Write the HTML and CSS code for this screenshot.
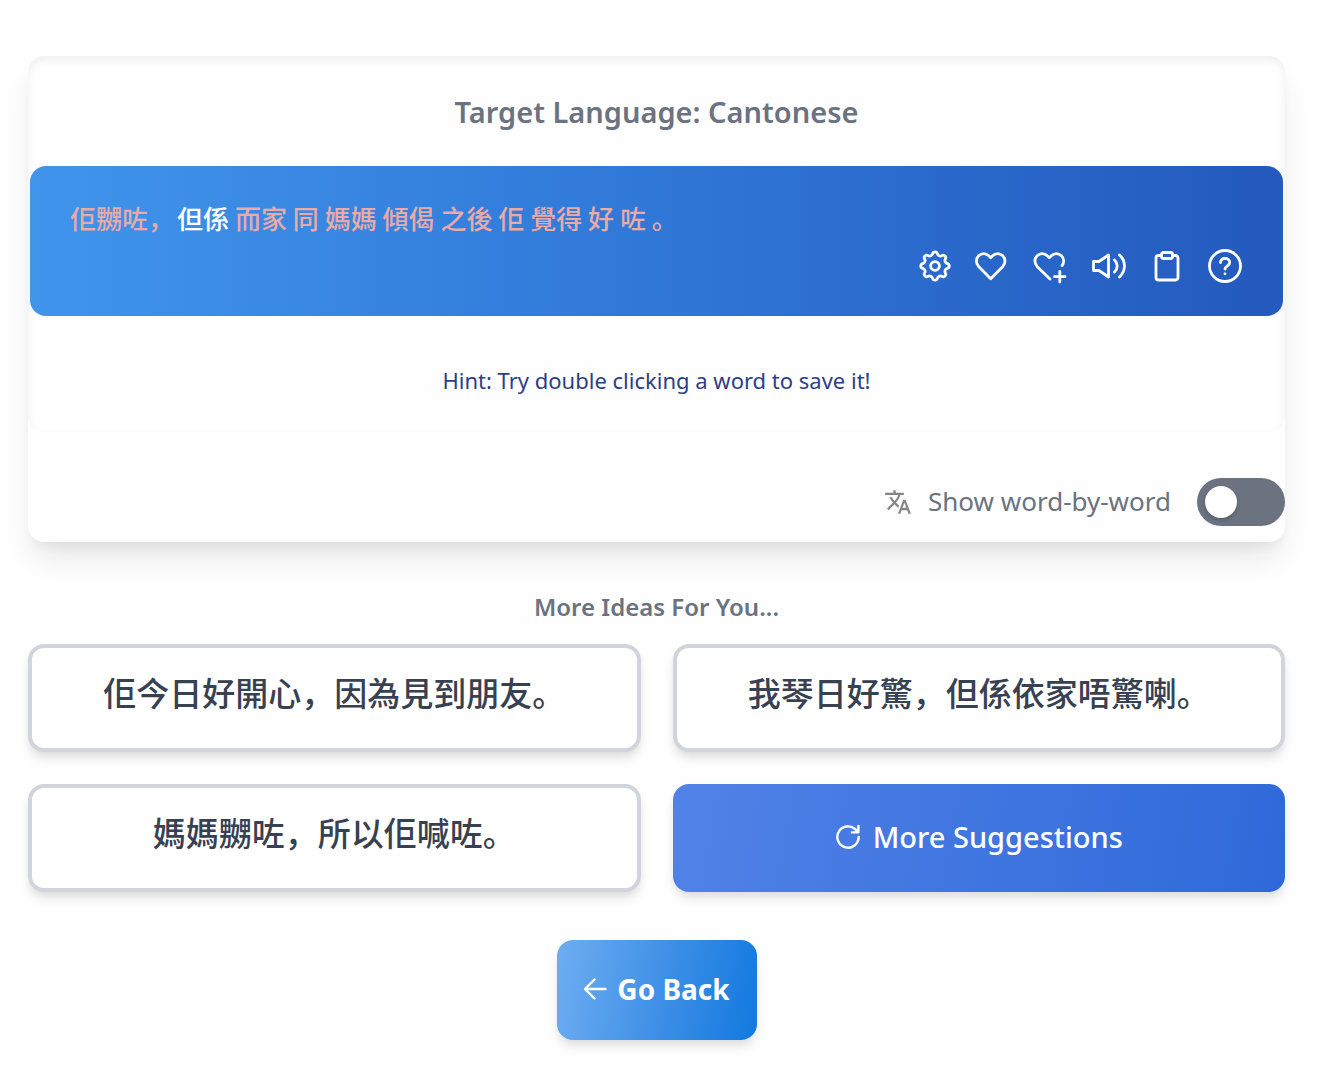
FILE: index.html
```html
<!DOCTYPE html>
<html lang="en">
<head>
<meta charset="utf-8">
<meta name="viewport" content="width=device-width, initial-scale=1">
<title>Target Language: Cantonese</title>
<link rel="stylesheet" href="styles.css">
</head>
<body>
<main class="page">
  <section class="card">
    <div class="panel">
      <h1 class="panel-title">Target Language: Cantonese</h1>
      <div class="phrase">
        <p class="phrase-text"><span>佢嬲咗，</span><span class="known">但係</span> <span>而家</span> <span>同</span> <span>媽媽</span> <span>傾偈</span> <span>之後</span> <span>佢</span> <span>覺得</span> <span>好</span> <span>咗</span> <span>。</span></p>
        <div class="actions">
          <button class="icon-button" type="button" aria-label="Settings">
            <svg viewBox="0 0 40 40"><path d="M32.26 17.56A2.5 2.5 0 0 1 32.26 22.44A3 3 0 0 0 30.39 26.94A2.5 2.5 0 0 1 26.94 30.39A3 3 0 0 0 22.44 32.26A2.5 2.5 0 0 1 17.56 32.26A3 3 0 0 0 13.06 30.39A2.5 2.5 0 0 1 9.61 26.94A3 3 0 0 0 7.74 22.44A2.5 2.5 0 0 1 7.74 17.56A3 3 0 0 0 9.61 13.06A2.5 2.5 0 0 1 13.06 9.61A3 3 0 0 0 17.56 7.74A2.5 2.5 0 0 1 22.44 7.74A3 3 0 0 0 26.94 9.61A2.5 2.5 0 0 1 30.39 13.06A3 3 0 0 0 32.26 17.56Z"/><circle cx="20" cy="20" r="4.4"/></svg>
          </button>
          <button class="icon-button" type="button" aria-label="Like">
            <svg viewBox="0 0 40 40"><path d="M17.700 32.800 5.600 20.400a7.500 7.500 0 0 1 0-10.600a7.200 7.200 0 0 1 10.200 0L17.700 11.800l1.900-2a7.200 7.200 0 0 1 10.200 0a7.500 7.500 0 0 1 0 10.600Z"/></svg>
          </button>
          <button class="icon-button" type="button" aria-label="Save phrase">
            <svg viewBox="0 0 40 40"><path d="M19 33 6.100 20.400a7.500 7.500 0 0 1 0-10.600a7.200 7.200 0 0 1 10.200 0l2 2 2-2a7.200 7.200 0 0 1 10.200 0c2.500 2.500 2.900 6.500 .6 9.800M28.800 25.500v10.500M23.500 30.700h10.500"/></svg>
          </button>
          <button class="icon-button" type="button" aria-label="Listen">
            <svg viewBox="0 0 40 40"><path d="M4.500 15.500H10L19.500 9v22L10 24.500H4.500ZM25.500 14c3.600 3.400 3.600 8.600 0 12M30.500 9c6.600 6.200 6.600 15.800 0 22"/></svg>
          </button>
          <button class="icon-button" type="button" aria-label="Copy">
            <svg viewBox="0 0 40 40"><path d="M14 9.500H11.500A2.500 2.500 0 0 0 9 12v19.500A2.500 2.500 0 0 0 11.500 34h17a2.500 2.500 0 0 0 2.500-2.500V12a2.500 2.500 0 0 0-2.500-2.500H26"/><rect x="14.500" y="6.500" width="11" height="6" rx="2"/></svg>
          </button>
          <button class="icon-button" type="button" aria-label="Help">
            <svg viewBox="0 0 40 40"><circle cx="20" cy="20" r="15.500"/><path d="M15.500 16.500c.3-2.500 2-4.100 4.500-4.100 2.700 0 4.700 1.700 4.700 4.100 0 3.200-4.400 3.400-4.700 6.500"/><path d="M20 27.800h.01"/></svg>
          </button>
        </div>
      </div>
      <p class="hint">Hint: Try double clicking a word to save it!</p>
    </div>
    <label class="toggle-row">
      <svg class="translate" viewBox="0 0 24 24" aria-hidden="true"><path d="M12.870 15.070l-2.540-2.510.03-.03A17.520 17.520 0 0 0 14.070 6H17V4h-7V2H8v2H1v2h11.170C11.500 7.920 10.440 9.750 9 11.350 8.070 10.320 7.300 9.190 6.690 8h-2c.73 1.630 1.730 3.170 2.980 4.560l-5.090 5.020L4 19l5-5 3.110 3.110.76-2.040zM18.500 10h-2L12 22h2l1.120-3h4.750L21 22h2l-4.500-12zm-2.620 7l1.620-4.330L19.120 17h-3.240z"/></svg>
      <span class="toggle-text">Show word-by-word</span>
      <input class="switch" type="checkbox" role="switch">
    </label>
  </section>

  <section class="ideas">
    <h2 class="ideas-title">More Ideas For You...</h2>
    <div class="ideas-grid">
      <button class="idea" type="button">佢今日好開心，因為見到朋友。</button>
      <button class="idea" type="button">我琴日好驚，但係依家唔驚喇。</button>
      <button class="idea" type="button">媽媽嬲咗，所以佢喊咗。</button>
      <button class="more" type="button">
        <svg class="more-icon" viewBox="0 0 28 28" aria-hidden="true"><path d="M25.500 14A11.500 11.500 0 1 1 21.800 5.600L25 8.800M25.200 2v7h-7"/></svg>
        More Suggestions
      </button>
    </div>
  </section>

  <button class="back" type="button">
    <svg class="back-icon" viewBox="0 0 24 24" aria-hidden="true"><path d="M22.500 12H2M11.500 2.500 2 12l9.500 9.500"/></svg>
    Go Back
  </button>
</main>
</body>
</html>
```

FILE: styles.css
```css
*,
*::before,
*::after {
  box-sizing: border-box;
}

body {
  margin: 0;
  background: #fefefe;
  color: #6b7280;
  font-family: "Noto Sans", "Noto Sans CJK SC", sans-serif;
}

h1,
h2,
p {
  margin: 0;
}

button {
  border: 0;
  font-family: inherit;
  cursor: pointer;
}

svg {
  display: block;
  fill: none;
  stroke: currentColor;
  stroke-linecap: round;
  stroke-linejoin: round;
}

.page {
  display: flex;
  flex-direction: column;
  padding: 56px 36px 28px 28px;
}

.card {
  padding-bottom: 16px;
  border-radius: 16px;
  background: #fefefe;
  box-shadow: 0 20px 30px -6px rgba(0, 0, 0, 0.1), 0 8px 12px -4px rgba(0, 0, 0, 0.05);
}

.panel {
  padding: 36px 2px;
  border-radius: 16px;
  box-shadow: inset 0 4px 8px rgba(0, 0, 0, 0.06);
}

.panel-title {
  margin-bottom: 34px;
  font-size: 29px;
  font-weight: 600;
  line-height: 40px;
  text-align: center;
}

.phrase {
  padding: 32px 38px 30px 40px;
  border-radius: 16px;
  background: linear-gradient(to right, #4095eb, #2f76d7 52%, #2459bd);
}

.phrase-text {
  margin-bottom: 8px;
  color: #e9aaa8;
  font-family: "Noto Sans CJK SC", sans-serif;
  font-size: 26px;
  font-weight: 500;
  line-height: 40px;
}

.known {
  margin-left: 3px;
  color: #fff;
}

.actions {
  display: flex;
  flex-wrap: wrap;
  justify-content: flex-end;
  gap: 18px;
}

.icon-button {
  width: 40px;
  height: 40px;
  padding: 0;
  background: none;
  color: #fff;
  stroke-width: 2.8;
}

.hint {
  padding-top: 48px;
  color: #2c3e87;
  font-size: 22px;
  line-height: 32px;
  text-align: center;
}

.toggle-row {
  display: flex;
  align-items: center;
  justify-content: flex-end;
  margin-top: 46px;
}

.translate {
  width: 28px;
  height: 28px;
  margin-right: 16px;
  fill: #858585;
  stroke: none;
}

.toggle-text {
  margin-right: 26px;
  padding-bottom: 2px;
  font-size: 26px;
  line-height: 40px;
}

.switch {
  display: flex;
  align-items: center;
  width: 88px;
  height: 48px;
  margin: 0;
  padding: 8px;
  border-radius: 24px;
  background: #6b7280;
  appearance: none;
  cursor: pointer;
}

.switch::before {
  content: "";
  width: 32px;
  height: 32px;
  border-radius: 50%;
  background: #fff;
  box-shadow: 0 2px 4px rgba(0, 0, 0, 0.2);
}

.switch:checked {
  justify-content: flex-end;
  background: #2f76d7;
}

.ideas {
  margin-top: 45px;
}

.ideas-title {
  margin-bottom: 17px;
  font-size: 24px;
  font-weight: 600;
  line-height: 40px;
  text-align: center;
}

.ideas-grid {
  display: grid;
  grid-template-columns: 1fr 1fr;
  gap: 32px;
}

.idea,
.more {
  min-height: 108px;
  padding: 24px;
  border-radius: 16px;
  font-weight: 500;
  line-height: 48px;
  box-shadow: 0 8px 12px -2px rgba(0, 0, 0, 0.1), 0 4px 8px -2px rgba(0, 0, 0, 0.06);
}

.idea {
  padding: 20px 24px 28px;
  border: 4px solid #d1d5db;
  background: #fff;
  color: #374151;
  font-size: 33px;
}

.more {
  display: flex;
  align-items: center;
  justify-content: center;
  gap: 12px;
  padding-bottom: 26px;
  background: linear-gradient(100deg, #5182e7, #2f69d9);
  color: #fff;
  font-size: 29px;
}

.more-icon {
  width: 26px;
  height: 26px;
  stroke-width: 2.6;
}

.back {
  display: flex;
  align-items: center;
  align-self: center;
  justify-content: center;
  gap: 10px;
  min-width: 200px;
  min-height: 100px;
  margin-top: 48px;
  padding-bottom: 4px;
  border-radius: 16px;
  background: linear-gradient(100deg, #6eaef1, #3c8ee6 55%, #1279df);
  color: #fff;
  font-size: 28px;
  font-weight: 700;
  box-shadow: 0 8px 12px -2px rgba(0, 0, 0, 0.1), 0 4px 8px -2px rgba(0, 0, 0, 0.06);
}

.back-icon {
  width: 24px;
  height: 24px;
  stroke-width: 2.4;
}
```
